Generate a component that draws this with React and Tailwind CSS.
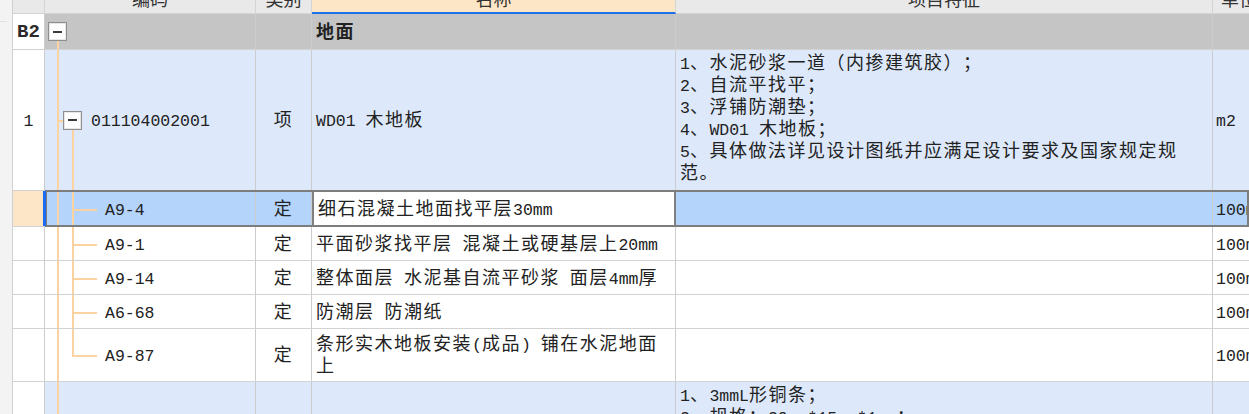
import React from "react";

const ASCII = /^[\x20-\x7e]+$/;

// SimSun-like metrics: CJK 18px + tracking gives a 19.5px advance, latin runs in mono half-width
const Txt = ({ s }) =>
  s
    .split(/([\x20-\x7e]+)/)
    .filter(Boolean)
    .map((p, i) =>
      ASCII.test(p) ? (
        <span
          key={i}
          className="whitespace-pre font-['Liberation_Mono',monospace] text-[16.5px] leading-[10px] tracking-normal"
        >
          {p}
        </span>
      ) : (
        <span key={i} className="tracking-[1.5px]">
          {p}
        </span>
      )
    );

const Minus = () => (
  <span className="flex h-[19px] w-[19px] shrink-0 items-center justify-center border border-[#8e8e8e] bg-white shadow-[inset_0_0_0_1px_#e6e6e6]">
    <span className="h-[2px] w-[9px] bg-[#3a3a3a]" />
  </span>
);

const Hcell = ({ w, t, active }) => (
  <div
    className={`h-[14px] shrink-0 overflow-hidden border-r border-[#d4d4d4] text-center ${w} ${
      active ? "border-b-2 border-b-[#1f6fe8] bg-[#fde6c6]" : "border-b border-b-[#d4d4d4]"
    }`}
  >
    <div className="-mt-[12px] leading-[20px] text-[#333]">{t}</div>
  </div>
);

const Line = ({ s }) => (
  <div className="h-[22px] whitespace-nowrap pb-[3px] leading-[19px]">
    <Txt s={s} />
  </div>
);

function Row({ h, bg = "bg-white", num, group, sel, tree, code, cat, name = [], feat = [], unit, codeBox }) {
  return (
    <div className={`relative flex shrink-0 border-b border-[#d2d2d2] ${h}`}>
      <div
        className={`relative flex w-[32px] shrink-0 items-center justify-center border-r border-[#cccccc] ${
          sel ? "bg-[#fde5c8]" : "bg-white"
        }`}
      >
        {group ? (
          <span className="font-['Liberation_Mono',monospace] text-[19px] font-bold text-[#2a2a2a]">{num}</span>
        ) : (
          num && <Line s={num} />
        )}
        {sel && <span className="absolute -right-[2px] top-0 bottom-0 z-10 w-[3px] bg-[#1b6cf2]" />}
      </div>

      <div className={`relative flex w-[211px] shrink-0 items-center border-r border-[#cccccc] ${bg}`}>
        {tree}
        {group && (
          <div className="pl-[3px]">
            <Minus />
          </div>
        )}
        {codeBox && (
          <div className="flex items-center gap-[9px] pl-[18px]">
            <Minus />
            <Line s={code} />
          </div>
        )}
        {!group && !codeBox && code && (
          <div className="pl-[60px]">
            <Line s={code} />
          </div>
        )}
      </div>

      <div className={`flex w-[56px] shrink-0 items-center justify-center border-r border-[#cccccc] ${bg}`}>
        {cat && <Line s={cat} />}
      </div>

      <div
        className={`flex w-[364px] shrink-0 flex-col justify-center overflow-hidden pl-[4px] ${
          sel ? "border-x-2 border-[#808080] bg-white" : `border-r border-[#cccccc] ${bg}`
        } ${group ? "font-bold" : ""}`}
      >
        {name.map((l, i) => (
          <Line key={i} s={l} />
        ))}
      </div>

      <div className={`w-[537px] shrink-0 overflow-hidden border-r border-[#cccccc] pl-[4px] pt-[2px] ${bg}`}>
        {feat.map((l, i) => (
          <Line key={i} s={l} />
        ))}
      </div>

      <div className={`flex min-w-0 flex-1 items-center overflow-hidden pl-[3px] ${bg}`}>
        {unit && <Line s={unit} />}
      </div>

      {sel && (
        <div className="pointer-events-none absolute left-[32px] right-0 -top-px -bottom-px border-2 border-[#7d7d7d]" />
      )}
    </div>
  );
}

const ln = "absolute bg-[#fad3a0]";

const L1 = () => <span className={`${ln} left-[12px] top-0 bottom-0 w-[2px]`} />;

const childTree = (last) => (
  <>
    <L1 />
    <span className={`${ln} left-[27px] top-0 w-[2px] ${last ? "h-1/2" : "bottom-0"}`} />
    <span className={`${ln} left-[27px] top-1/2 h-[2px] w-[25px]`} />
  </>
);

const quotas = [
  { code: "A9-4", name: ["细石混凝土地面找平层30mm"], h: "h-[36px]", sel: true },
  { code: "A9-1", name: ["平面砂浆找平层 混凝土或硬基层上20mm"], h: "h-[34px]" },
  { code: "A9-14", name: ["整体面层 水泥基自流平砂浆 面层4mm厚"], h: "h-[34px]" },
  { code: "A6-68", name: ["防潮层 防潮纸"], h: "h-[34px]" },
  { code: "A9-87", name: ["条形实木地板安装(成品) 铺在水泥地面", "上"], h: "h-[53px]" },
];

export default function App() {
  return (
    <div className="flex h-[414px] w-[1249px] overflow-hidden bg-white font-['Noto_Sans_CJK_SC',sans-serif] text-[18px] leading-[22px] text-[#222] [text-spacing-trim:space-all]">
      <div className="relative w-[13px] shrink-0 border-r border-[#d0d0d0] bg-[#f3f3f3]">
        <span className="absolute left-0 top-[21px] h-px w-[7px] bg-[#e2e2e2]" />
      </div>

      <div className="flex min-w-0 flex-1 flex-col">
        <div className="flex shrink-0 bg-[#e9e9e9]">
          <div className="h-[14px] w-[32px] shrink-0 border-r border-b border-[#d4d4d4]" />
          <Hcell w="w-[211px]" t="编码" />
          <Hcell w="w-[56px]" t="类别" />
          <Hcell w="w-[364px]" t="名称" active />
          <Hcell w="w-[537px]" t="项目特征" />
          <div className="h-[14px] min-w-0 flex-1 overflow-hidden border-b border-[#d4d4d4] pl-[8px]">
            <div className="-mt-[12px] whitespace-nowrap leading-[20px] text-[#333]">单位</div>
          </div>
        </div>

        <Row
          h="h-[36px]"
          bg="bg-[#c5c5c5]"
          num="B2"
          group
          name={["地面"]}
          tree={<span className={`${ln} left-[12px] top-[27px] bottom-0 w-[2px]`} />}
        />

        <Row
          h="h-[141px]"
          bg="bg-[#dde9fb]"
          num="1"
          codeBox
          code="011104002001"
          cat="项"
          name={["WD01 木地板"]}
          feat={[
            "1、水泥砂浆一道（内掺建筑胶）；",
            "2、自流平找平；",
            "3、浮铺防潮垫；",
            "4、WD01 木地板；",
            "5、具体做法详见设计图纸并应满足设计要求及国家规定规",
            "范。",
          ]}
          unit="m2"
          tree={
            <>
              <L1 />
              <span className={`${ln} left-[13px] top-1/2 h-[2px] w-[5px]`} />
              <span className={`${ln} left-[27px] top-[calc(50%+10px)] bottom-0 w-[2px]`} />
            </>
          }
        />

        {quotas.map((q, i) => (
          <Row
            key={q.code}
            h={q.h}
            bg={q.sel ? "bg-[#b4d4fb]" : "bg-white"}
            sel={q.sel}
            code={q.code}
            cat="定"
            name={q.name}
            unit="100m2"
            tree={childTree(i === quotas.length - 1)}
          />
        ))}

        <Row
          h="h-[160px]"
          bg="bg-[#dde9fb]"
          num="2"
          codeBox
          code="011104005001"
          cat="项"
          name={["铜条"]}
          feat={["1、3mmL形铜条；", "2、规格：30mm*15mm*1mm；"]}
          unit="m"
          tree={<L1 />}
        />
      </div>
    </div>
  );
}
